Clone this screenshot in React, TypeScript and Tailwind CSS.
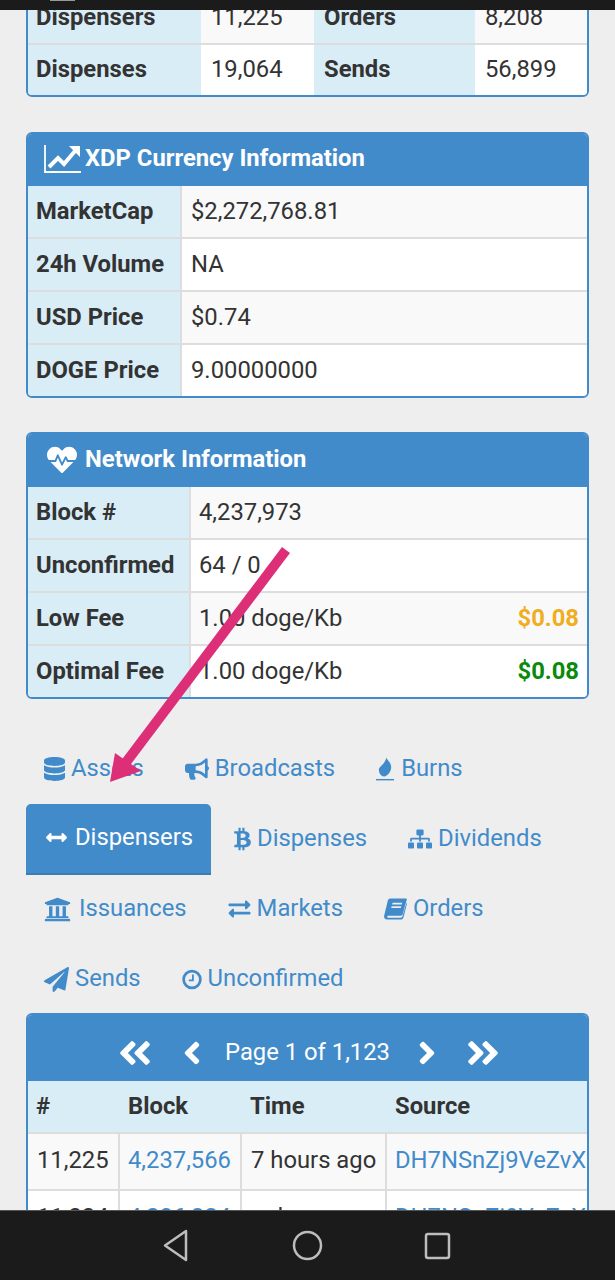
import React from 'react';
import {
  FaAngleDoubleLeft,
  FaAngleDoubleRight,
  FaAngleLeft,
  FaAngleRight,
  FaArrowsAltH,
  FaBtc,
  FaBullhorn,
  FaDatabase,
  FaExchangeAlt,
  FaHeartbeat,
  FaPaperPlane,
  FaSitemap,
  FaUniversity,
} from 'react-icons/fa';

const ChartIcon = () => (
  <svg viewBox="0 0 37 28" className="w-[37px] h-[28px]" fill="none" stroke="currentColor">
    <path d="M1 0v27h36" strokeWidth="1.800" />
    <path d="M5 22l9-9 6 6 11-13" strokeWidth="4" />
    <path d="M25 1h11v11z" fill="currentColor" stroke="none" />
  </svg>
);

const BurnIcon = () => (
  <svg viewBox="0 0 20 24" className="w-[19px] h-[24px]" fill="currentColor">
    <path d="M11 0c.5 3 5 5 5 10 0 5-3.500 9-7 10l-2-.3C4.500 18.500 3 15.500 3 13c0-3 4-5 5.500-7.500C9.500 4 10.500 2 11 0z" />
    <rect x="0" y="22.500" width="19" height="1.500" />
  </svg>
);

const BookIcon = () => (
  <svg viewBox="0 0 24 22" className="w-[23px] h-[22px]" fill="currentColor">
    <path
      fillRule="evenodd"
      d="M6.500 0H23c.7 0 1 .5.8 1.200L19.500 16.500c-.3 1-1 1.500-2 1.500H4.500c-1.200 0-1.700 2-.3 2h13.300c.8 0 1.500-.4 1.700-1.200L23.500 4.500l.5.7-3.600 14.300c-.5 1.500-1.600 2.500-3 2.500H3.500C1 22-.4 20 .2 17.800L4 2c.3-1.200 1.300-2 2.500-2zM9 4.500l-.5 1.700h10l.5-1.700zM8 8.200l-.5 1.700h10l.5-1.700z"
    />
  </svg>
);

const ClockIcon = () => (
  <svg viewBox="0 0 22 22" className="w-[20px] h-[21px]" fill="none" stroke="currentColor">
    <circle cx="11" cy="11" r="9.200" strokeWidth="3" />
    <path d="M12 5.500v6.500H7.500" strokeWidth="2" />
  </svg>
);

const InfoTable = ({ labelWidth, valuePad, rows }: { labelWidth: string; valuePad: string; rows: [string, string, React.ReactNode?][] }) => (
  <table className="w-full border-collapse table-fixed">
    <colgroup>
      <col className={labelWidth} />
      <col />
    </colgroup>
    <tbody>
      {rows.map(([label, value, extra], i) => (
        <tr key={label} className={i === 0 || i === 3 ? 'h-[52px]' : 'h-[53px]'}>
          <th className={`text-left font-bold pl-[8px] bg-[#d9edf7] border-[#ddd] border-r-2 ${i > 0 ? 'border-t-2' : ''}`}>{label}</th>
          <td className={`${valuePad} pr-[8px] border-[#ddd] ${i > 0 ? 'border-t-2' : ''} ${i % 2 === 0 ? 'bg-[#f9f9f9]' : 'bg-white'}`}>
            <div className="flex justify-between">
              <span>{value}</span>
              {extra}
            </div>
          </td>
        </tr>
      ))}
    </tbody>
  </table>
);

const Tab = ({ icon, label, active }: { icon: React.ReactNode; label: string; active?: boolean }) => (
  <div
    className={`flex items-center px-[18px] gap-[6px] ${
      active ? 'h-[71px] pb-[2px] bg-[#428bca] text-white rounded-t-[5px] border-b-2 border-[#3b7cb5]' : 'h-[70px] text-[#428bca]'
    }`}
  >
    {icon}
    <span>{label}</span>
  </div>
);

export default function App() {
  return (
    <div className="relative h-[1280px] overflow-hidden bg-[#eeeeee] text-[#333] text-[23.800px] font-['Roboto',sans-serif]">
      {/* Status bar */}
      <div className="absolute top-0 left-0 right-0 h-[10px] bg-[#1b1b1b] z-20">
        <div className="ml-[50px] w-[25px] h-[1px] bg-[#999]" />
      </div>

      <div className="px-[26px] flex flex-col">
        {/* Top stats, scrolled partly off screen */}
        <div className="mt-[-10px] border-2 border-[#428bca] rounded-b-[6px] overflow-hidden">
          <table className="w-full border-collapse table-fixed">
            <colgroup>
              <col className="w-[173px]" />
              <col className="w-[113px]" />
              <col className="w-[161px]" />
              <col />
            </colgroup>
            <tbody>
              <tr className="h-[52px] border-b-2 border-[#ddd]">
                <th className="text-left font-bold pl-[8px] bg-[#d9edf7]">Dispensers</th>
                <td className="pl-[10px] bg-[#f9f9f9]">11,225</td>
                <th className="text-left font-bold pl-[10px] bg-[#d9edf7]">Orders</th>
                <td className="pl-[10px] bg-[#f9f9f9]">8,208</td>
              </tr>
              <tr className="h-[51px]">
                <th className="text-left font-bold pl-[8px] bg-[#d9edf7]">Dispenses</th>
                <td className="pl-[10px] bg-white">19,064</td>
                <th className="text-left font-bold pl-[10px] bg-[#d9edf7]">Sends</th>
                <td className="pl-[10px] bg-white">56,899</td>
              </tr>
            </tbody>
          </table>
        </div>

        {/* XDP currency */}
        <div className="mt-[35px] border-2 border-[#428bca] rounded-[6px] overflow-hidden">
          <div className="h-[52px] pb-[2px] bg-[#428bca] text-white font-bold flex items-center pl-[16px] gap-[4px]">
            <ChartIcon />
            <span>XDP Currency Information</span>
          </div>
          <InfoTable
            labelWidth="w-[153px]"
            valuePad="pl-[9px]"
            rows={[
              ['MarketCap', '$2,272,768.81'],
              ['24h Volume', 'NA'],
              ['USD Price', '$0.74'],
              ['DOGE Price', '9.00000000'],
            ]}
          />
        </div>

        {/* Network */}
        <div className="mt-[34px] border-2 border-[#428bca] rounded-[6px] overflow-hidden">
          <div className="h-[53px] pb-[1px] bg-[#428bca] text-white font-bold flex items-center pl-[17px] gap-[6px]">
            <FaHeartbeat className="w-[34px] h-[30px]" />
            <span>Network Information</span>
          </div>
          <InfoTable
            labelWidth="w-[162px]"
            valuePad="pl-[8px]"
            rows={[
              ['Block #', '4,237,973'],
              ['Unconfirmed', '64 / 0'],
              ['Low Fee', '1.00 doge/Kb', <span key="l" className="font-bold text-[#f0ad1e]">$0.08</span>],
              ['Optimal Fee', '1.00 doge/Kb', <span key="o" className="font-bold text-[#0a8a0a]">$0.08</span>],
            ]}
          />
        </div>

        {/* Tabs */}
        <div className="mt-[35px] flex flex-col">
          <div className="flex gap-[5px] h-[70px] items-start">
            <Tab icon={<FaDatabase className="w-[21px] h-[24px]" />} label="Assets" />
            <Tab icon={<FaBullhorn className="w-[24px] h-[22px]" />} label="Broadcasts" />
            <Tab icon={<BurnIcon />} label="Burns" />
          </div>
          <div className="flex gap-[5px] h-[70px] items-start">
            <Tab active icon={<FaArrowsAltH className="w-[25px] h-[21px]" />} label="Dispensers" />
            <Tab icon={<FaBtc className="w-[17px] h-[24px]" />} label="Dispenses" />
            <Tab icon={<FaSitemap className="w-[24px] h-[22px]" />} label="Dividends" />
          </div>
          <div className="flex gap-[5px] h-[70px] items-start">
            <Tab icon={<FaUniversity className="w-[27px] h-[27px] mr-[2px]" />} label="Issuances" />
            <Tab icon={<FaExchangeAlt className="w-[23px] h-[22px]" />} label="Markets" />
            <Tab icon={<BookIcon />} label="Orders" />
          </div>
          <div className="flex gap-[5px] h-[70px] items-start">
            <Tab icon={<FaPaperPlane className="w-[25px] h-[25px]" />} label="Sends" />
            <Tab icon={<ClockIcon />} label="Unconfirmed" />
          </div>
        </div>

        {/* Dispensers table */}
        <div className="mt-[-1px] border-2 border-[#428bca] border-b-0 rounded-t-[6px] overflow-hidden">
          <div className="h-[66px] pt-[10px] pl-[3px] bg-[#428bca] text-white flex items-center justify-center">
            <FaAngleDoubleLeft className="w-[38px] h-[38px]" />
            <FaAngleLeft className="ml-[25px] w-[26px] h-[36px]" />
            <span className="ml-[20px]">Page 1 of 1,123</span>
            <FaAngleRight className="ml-[24px] w-[26px] h-[36px]" />
            <FaAngleDoubleRight className="ml-[24px] w-[38px] h-[38px]" />
          </div>
          <table className="w-full border-collapse table-fixed">
            <colgroup>
              <col className="w-[91px]" />
              <col className="w-[122px]" />
              <col className="w-[145px]" />
              <col />
            </colgroup>
            <thead>
              <tr className="h-[52px] bg-[#d9edf7] text-left">
                <th className="pl-[8px] font-bold">#</th>
                <th className="pl-[9px] font-bold">Block</th>
                <th className="pl-[9px] font-bold">Time</th>
                <th className="pl-[9px] font-bold">Source</th>
              </tr>
            </thead>
            <tbody>
              <tr className="h-[57px] bg-[#f9f9f9] border-t-2 border-[#ddd]">
                <td className="pl-[9px] pb-[2px] border-r-2 border-[#ddd]">11,225</td>
                <td className="pl-[8px] pb-[2px] border-r-2 border-[#ddd] text-[#428bca]">4,237,566</td>
                <td className="pl-[9px] pb-[2px] border-r-2 border-[#ddd]">7 hours ago</td>
                <td className="pl-[8px] pb-[2px] text-[#428bca] overflow-hidden whitespace-nowrap">DH7NSnZj9VeZvXkLm2</td>
              </tr>
              <tr className="h-[57px] bg-white border-t-2 border-[#ddd]">
                <td className="pl-[9px] pb-[2px] border-r-2 border-[#ddd]">11,224</td>
                <td className="pl-[8px] pb-[2px] border-r-2 border-[#ddd] text-[#428bca]">4,236,884</td>
                <td className="pl-[9px] pb-[2px] border-r-2 border-[#ddd]">a day ago</td>
                <td className="pl-[8px] pb-[2px] text-[#428bca] overflow-hidden whitespace-nowrap">DH7NSnZj9VeZvXkLm2</td>
              </tr>
            </tbody>
          </table>
        </div>
      </div>

      {/* Annotation arrow */}
      <svg className="absolute left-0 top-0 z-10" width="615" height="800" viewBox="0 0 615 800">
        <line x1="286" y1="550" x2="124" y2="765" stroke="#dd2e78" strokeWidth="10" />
        <polygon points="110,782 115,753 141,771" fill="#dd2e78" />
      </svg>

      {/* Android nav bar */}
      <div className="absolute bottom-0 left-0 right-0 h-[70px] bg-[#1b1b1b] z-20 flex items-center justify-center border-t border-[#555]">
        <svg width="615" height="70" viewBox="0 0 615 70" fill="none" stroke="#bdbdbd" strokeWidth="2.500">
          <path d="M186 20v29l-21-14.500z" strokeLinejoin="round" />
          <circle cx="307.500" cy="34.500" r="13.500" />
          <rect x="426" y="23" width="23" height="24" rx="2" />
        </svg>
      </div>
    </div>
  );
}
